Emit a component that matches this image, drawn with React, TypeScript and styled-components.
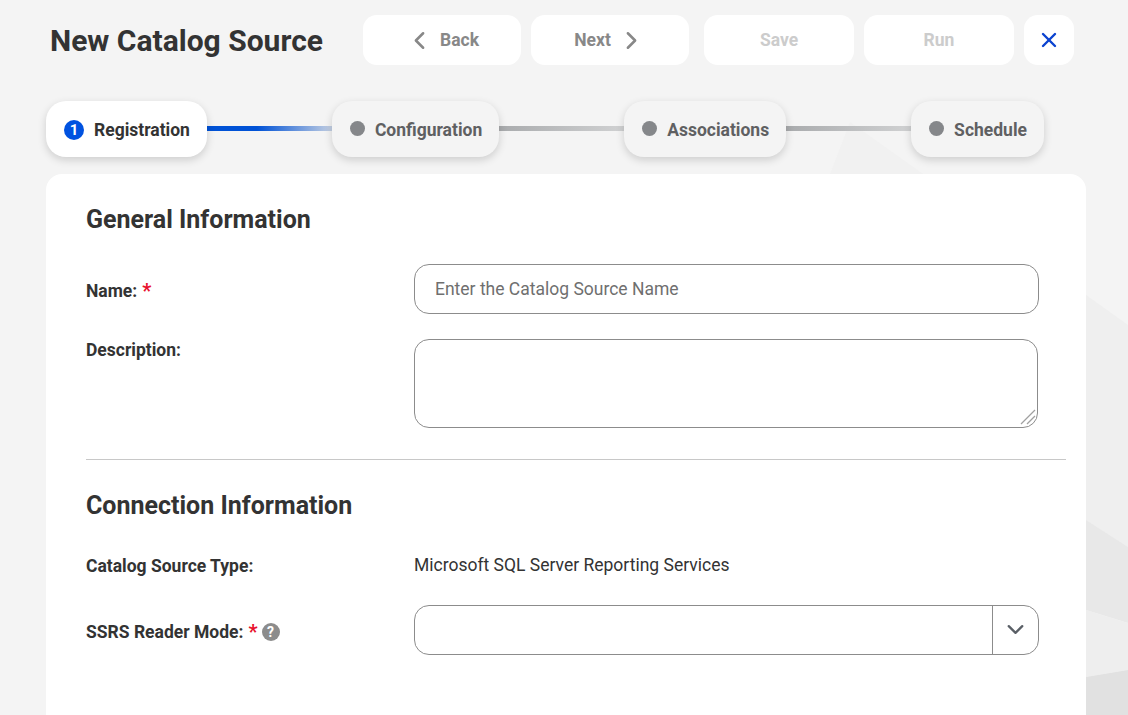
import styled, { createGlobalStyle } from "styled-components";
import { ChevronDown, ChevronLeft, ChevronRight, X } from "lucide-react";

const GlobalStyle = createGlobalStyle`
  html, body {
    margin: 0;
    height: 100%;
    background: #f4f4f4;
    font-family: Roboto, "Liberation Sans", sans-serif;
    color: #333;
  }
  * { box-sizing: border-box; }
`;

const Page = styled.div`
  position: relative;
  width: 1128px;
  height: 715px;
  overflow: hidden;
  background: #f4f4f4;
`;

const Backdrop = styled.svg`
  position: absolute;
  inset: 0;
  width: 1128px;
  height: 715px;
`;

const Content = styled.div`
  position: relative;
  padding: 15px 42px 0 46px;
`;

const Header = styled.header`
  display: flex;
  align-items: center;
  height: 50px;
  padding-right: 12px;
`;

const Title = styled.h1`
  flex: 1;
  margin: 0 0 0 4px;
  font-size: 30px;
  font-weight: 700;
  color: #333;
`;

const ActionButton = styled.button<{ $width: number; $tone?: "muted" | "accent"; $gap?: number }>`
  display: flex;
  align-items: center;
  justify-content: center;
  gap: 6px;
  width: ${(p) => p.$width}px;
  height: 50px;
  margin-left: ${(p) => p.$gap ?? 10}px;
  border: none;
  border-radius: 14px;
  background: #fff;
  font-family: inherit;
  font-size: 17.5px;
  font-weight: 700;
  color: ${(p) => (p.$tone === "muted" ? "#ccc" : p.$tone === "accent" ? "#0b43d0" : "#888")};
  padding: 0;
`;

const Stepper = styled.div`
  display: flex;
  align-items: center;
  margin-top: 36px;
  padding-right: 42px;
`;

const Step = styled.div<{ $active?: boolean }>`
  display: flex;
  align-items: center;
  gap: 10px;
  height: 56px;
  padding: 1px 17px 0 18px;
  border-radius: 20px;
  background: ${(p) => (p.$active ? "#fff" : "#f4f4f4")};
  box-shadow: 0 3px 8px rgba(0, 0, 0, 0.16);
  font-size: 17.5px;
  font-weight: 700;
  color: ${(p) => (p.$active ? "#333" : "#5f6062")};
  white-space: nowrap;
  z-index: 1;
`;

const StepNumber = styled.span`
  display: flex;
  align-items: center;
  justify-content: center;
  width: 20px;
  height: 20px;
  border-radius: 50%;
  background: #0052e0;
  color: #fff;
  font-size: 15px;
`;

const StepDot = styled.span`
  width: 15px;
  height: 15px;
  margin-top: -2px;
  border-radius: 50%;
  background: #85878a;
`;

const Connector = styled.div<{ $active?: boolean }>`
  flex: 1;
  height: 5px;
  margin-top: -1px;
  background: linear-gradient(
    90deg,
    ${(p) => (p.$active ? "#0052d6 40%, #c3cfe2" : "#a9abad, #d0d1d2")}
  );
`;

const Card = styled.main`
  height: 560px;
  margin-top: 17px;
  padding: 31px 20px 0 40px;
  border-radius: 16px;
  background: #fff;
`;

const SectionTitle = styled.h2`
  margin: 0;
  height: 29px;
  font-size: 25px;
  line-height: 29px;
  font-weight: 700;
  color: #333;
`;

const Row = styled.div<{ $top: number; $center?: boolean }>`
  display: grid;
  grid-template-columns: 328px 625px;
  align-items: ${(p) => (p.$center ? "center" : "start")};
  margin-top: ${(p) => p.$top}px;
`;

const Label = styled.label<{ $pad?: number }>`
  display: flex;
  align-items: center;
  gap: 5px;
  padding-top: ${(p) => p.$pad ?? 0}px;
  font-size: 17.5px;
  font-weight: 700;
  color: #333;
`;

const Required = styled.span`
  color: #e8112d;
  font-size: 20px;
  line-height: 20px;
`;

const HelpIcon = styled.span`
  display: flex;
  align-items: center;
  justify-content: center;
  width: 18px;
  height: 18px;
  margin-left: -1px;
  border-radius: 50%;
  background: #8c8c8c;
  color: #fff;
  font-size: 14px;
`;

const TextInput = styled.input`
  width: 625px;
  height: 50px;
  padding: 0 20px;
  border: 1px solid #8c8c8c;
  border-radius: 15px;
  font-family: inherit;
  font-size: 17.5px;
  color: #333;
  outline: none;
  &::placeholder {
    color: #6f6f6f;
    opacity: 1;
  }
`;

const TextAreaWrap = styled.div`
  position: relative;
  width: 624px;
  height: 89px;
`;

const TextArea = styled.textarea`
  display: block;
  width: 100%;
  height: 100%;
  padding: 12px 20px;
  border: 1px solid #8c8c8c;
  border-radius: 15px;
  font-family: inherit;
  font-size: 17.5px;
  outline: none;
  resize: none;
`;

const ResizeGrip = styled.svg`
  position: absolute;
  right: 2px;
  bottom: 3px;
  width: 16px;
  height: 16px;
  stroke: #a0a0a0;
  stroke-width: 1.3;
`;

const Divider = styled.hr`
  height: 1px;
  margin: 31px 0 31px;
  border: none;
  background: #c8c8c8;
`;

const Value = styled.div`
  align-self: start;
  margin-top: -0.5px;
  font-size: 17.5px;
  color: #333;
`;

const SelectBox = styled.div`
  display: flex;
  width: 625px;
  height: 50px;
  border: 1px solid #8c8c8c;
  border-radius: 15px;
`;

const SelectValue = styled.div`
  flex: 1;
`;

const SelectToggle = styled.div`
  display: flex;
  align-items: center;
  justify-content: center;
  width: 46px;
  padding-bottom: 2px;
  border-left: 1px solid #8c8c8c;
  color: #5a5f66;
`;

export default function App() {
  return (
    <Page>
      <GlobalStyle />
      <Backdrop viewBox="0 0 1128 715">
        <polygon points="850,122 923,174 830,174" fill="#f1f1f1" />
        <polygon points="1086,295 1128,325 1128,547 1086,520" fill="#efefef" />
        <polygon points="1086,520 1128,547 1128,623 1086,610" fill="#e8e8e8" />
        <polygon points="1086,610 1128,623 1128,670 1086,677" fill="#eeeeee" />
        <polygon points="1086,677 1128,670 1128,715 1086,715" fill="#e1e1e1" />
      </Backdrop>
      <Content>
        <Header>
          <Title>New Catalog Source</Title>
          <ActionButton $width={158}>
            <ChevronLeft size={29} strokeWidth={2.1} />
            Back
          </ActionButton>
          <ActionButton $width={158}>
            Next
            <ChevronRight size={29} strokeWidth={2.1} />
          </ActionButton>
          <ActionButton $width={150} $tone="muted" $gap={15}>
            Save
          </ActionButton>
          <ActionButton $width={150} $tone="muted">
            Run
          </ActionButton>
          <ActionButton $width={50} $tone="accent">
            <X size={24} strokeWidth={2.4} />
          </ActionButton>
        </Header>

        <Stepper>
          <Step $active>
            <StepNumber>1</StepNumber>
            Registration
          </Step>
          <Connector $active />
          <Step>
            <StepDot />
            Configuration
          </Step>
          <Connector />
          <Step>
            <StepDot />
            Associations
          </Step>
          <Connector />
          <Step>
            <StepDot />
            Schedule
          </Step>
        </Stepper>

        <Card>
          <SectionTitle>General Information</SectionTitle>
          <Row $top={30} $center>
            <Label $pad={3}>
              Name: <Required>*</Required>
            </Label>
            <TextInput placeholder="Enter the Catalog Source Name" />
          </Row>
          <Row $top={25}>
            <Label $pad={1}>Description:</Label>
            <TextAreaWrap>
              <TextArea />
              <ResizeGrip viewBox="0 0 16 16" aria-hidden="true">
                <line x1="1" y1="15" x2="15" y2="1" />
                <line x1="7" y1="15" x2="15" y2="7" />
              </ResizeGrip>
            </TextAreaWrap>
          </Row>
          <Divider />
          <SectionTitle>Connection Information</SectionTitle>
          <Row $top={35} $center>
            <Label $pad={1}>Catalog Source Type:</Label>
            <Value>Microsoft SQL Server Reporting Services</Value>
          </Row>
          <Row $top={29} $center>
            <Label $pad={4}>
              SSRS Reader Mode: <Required>*</Required>
              <HelpIcon>?</HelpIcon>
            </Label>
            <SelectBox>
              <SelectValue />
              <SelectToggle>
                <ChevronDown size={27} strokeWidth={2} />
              </SelectToggle>
            </SelectBox>
          </Row>
        </Card>
      </Content>
    </Page>
  );
}
